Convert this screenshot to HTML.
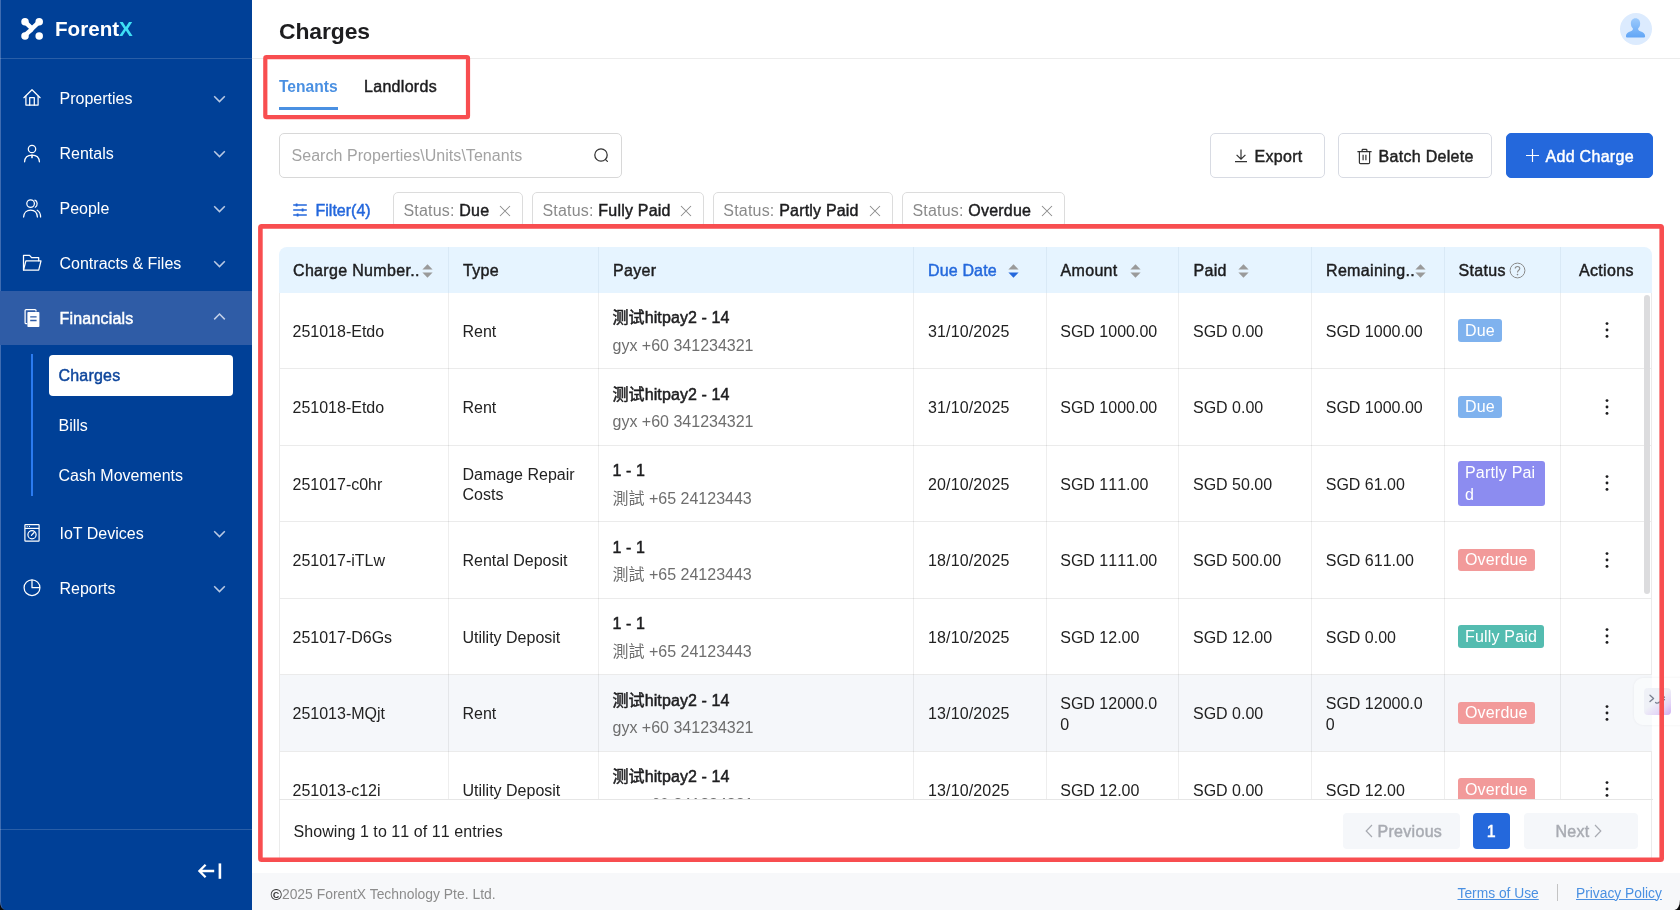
<!DOCTYPE html>
<html lang="en">
<head>
<meta charset="utf-8">
<title>Charges - ForentX</title>
<style>
*{box-sizing:border-box;margin:0;padding:0}
html,body{width:1680px;height:910px;overflow:hidden;background:#fff}
body{position:relative;font-family:"Liberation Sans","Noto Sans CJK SC",sans-serif;font-size:16px;color:#222;-webkit-font-smoothing:antialiased}
.abs{position:absolute}
.md{font-weight:normal!important;-webkit-text-stroke:.45px;letter-spacing:.3px}
svg{display:block}

/* ---------- sidebar ---------- */
#side{position:absolute;left:0;top:0;width:251.5px;height:910px;background:#004097;color:#fff}
#side .edge{position:absolute;left:0;top:0;width:1px;height:901px;background:#3f6cb1}
#logo{position:absolute;left:0;top:0;width:251.5px;height:58.5px;border-bottom:1px solid rgba(255,255,255,.16)}
#logo .mark{position:absolute;left:20px;top:17px}
#logo .txt{position:absolute;left:55px;top:16.3px;font-size:20.6px;font-weight:bold;line-height:26px;letter-spacing:0}
#logo .txt b{color:#3fe0f5}
.mi{position:absolute;left:0;width:251.5px;height:55px}
.mi.on{background:#2f5ca6}
.mi .ic{position:absolute;left:22px;top:17px;width:20px;height:20px}
.mi .lb{position:absolute;left:59.5px;top:0;line-height:55px;font-size:16px;white-space:nowrap}
.mi.on .lb{-webkit-text-stroke:.45px;letter-spacing:.2px;line-height:56px}
.mi .ch{position:absolute;left:213px;top:23.6px;width:13px;height:10px}
#subline{position:absolute;left:30.5px;top:354px;width:2px;height:141.5px;background:#2b7bf0}
.sub{position:absolute;left:58.5px;font-size:16px;line-height:20px;white-space:nowrap}
#subon{position:absolute;left:49.3px;top:354.8px;width:183.7px;height:41.2px;background:#fff;border-radius:4px}
#sidediv{position:absolute;left:0;top:829px;width:251.5px;height:1px;background:rgba(255,255,255,.16)}

/* ---------- header ---------- */
#hdr{position:absolute;left:251.5px;top:0;width:1428.5px;height:58.5px;border-bottom:1px solid #ececec;background:#fff}
#title{position:absolute;left:279px;top:15px;font-size:22.9px;font-weight:bold;line-height:32px;color:#1d1d1f;letter-spacing:-.1px}

/* ---------- tabs / toolbar ---------- */
#avatar{position:absolute;left:1620px;top:13.2px;width:32px;height:32px;border-radius:50%;background:#dcebfe;overflow:hidden}
.tab{position:absolute;top:75.7px;line-height:22px;font-size:15.6px;font-weight:bold;white-space:nowrap}
#tabline{position:absolute;left:279px;top:107px;width:59.2px;height:3px;background:#4a90e2}
.redbox{position:absolute;border:4.5px solid #f84e50;border-radius:3px}
#search{position:absolute;left:279px;top:133px;width:342.5px;height:45px;border:1px solid #d8d8d8;border-radius:5px;background:#fff}
#search span{position:absolute;left:11.5px;top:0;line-height:44px;font-size:16px;letter-spacing:.04px;color:#a3a3a3;white-space:nowrap}
.btn{position:absolute;top:133px;height:44.7px;border:1px solid #d8dbe3;border-radius:5px;background:#fff;font-size:16px;-webkit-text-stroke:.45px;letter-spacing:.3px;line-height:45.4px;white-space:nowrap;color:#222}
.btn span{position:absolute;top:0}
#filter{position:absolute;left:315.5px;top:200.5px;line-height:20px;font-size:16px;-webkit-text-stroke:.45px;color:#2367dc;white-space:nowrap}
.chip{position:absolute;top:192px;height:35.5px;border:1px solid #dcdcdc;border-radius:5px;background:#fff;font-size:16px;line-height:35px;white-space:nowrap;color:#8a8a8a;letter-spacing:.2px}
.chip span{position:absolute;top:0}
.chip b{color:#1d1d1f;font-weight:normal;-webkit-text-stroke:.45px}
.chip svg{position:absolute;top:12px}

/* ---------- table ---------- */
#tblwrap{position:absolute;left:279px;top:292.5px;width:1372.7px;height:565px;border-left:1px solid #ebebeb;border-right:1px solid #ebebeb}
#thead{position:absolute;left:279px;top:247px;width:1372.7px;height:45.5px;background:#e6f4ff;border-radius:8px 8px 0 0}
.th{position:absolute;top:248px;height:45.5px;line-height:45.5px;font-size:16px;-webkit-text-stroke:.45px;letter-spacing:.33px;color:#1d1d1f;white-space:nowrap}
.vl{position:absolute;top:292.5px;width:1px;height:506px;background:rgba(0,0,0,.068);z-index:2}
.vlh{position:absolute;top:247px;width:1px;height:45.5px;background:#d9e9f6;z-index:2}
#tbody{position:absolute;left:279.5px;top:292.5px;width:1372.5px;height:506.5px;overflow:hidden}
.row{position:absolute;left:0;width:1372.5px;height:76.5px;border-bottom:1px solid #ebebeb}
.row.hv{background:#f5f7fa}
.c{position:absolute;top:1.5px;height:76px;font-kerning:none;margin-left:.5px;display:flex;flex-direction:column;justify-content:center;font-size:16px;line-height:20.5px;color:#222}
.c .p1{font-size:16px;-webkit-text-stroke:.5px;letter-spacing:.1px;line-height:20px;color:#1d1d1f;margin-bottom:7px;white-space:nowrap;position:relative;top:-.3px}
.c .p2{color:#6e6e6e;line-height:20px;white-space:nowrap}
.tag{display:inline-block;align-self:flex-start;padding:.7px 7px 0;margin-left:-.6px;border-radius:3px;color:#fff;font-size:16px;line-height:22.3px;letter-spacing:.2px;position:relative;top:-1.5px;font-kerning:normal}
.dots{position:absolute;left:1325px;top:29.5px;width:4px;height:16px}
#tfootline{position:absolute;left:279px;top:798.5px;width:1373.5px;height:1px;background:#e6e6e6}
#showing{position:absolute;left:293.5px;top:822px;line-height:20px;font-size:16px;color:#222;white-space:nowrap;font-kerning:none;letter-spacing:.07px}
.pg{position:absolute;top:813px;height:36px;border-radius:4px;background:#f5f7fa;color:#a8abb2;font-size:16px;-webkit-text-stroke:.45px;letter-spacing:.3px;line-height:38px;white-space:nowrap}
.pg span{position:absolute;top:0}
#scroll{position:absolute;left:1644px;top:295px;width:6px;height:299px;border-radius:3px;background:#dcdcde}
#scrolltrack{display:none}
/* ---------- footer ---------- */
#foot{position:absolute;left:251.5px;top:873px;width:1428.5px;height:37px;background:#f7f8fa}
#foot .l{position:absolute;top:12.5px;line-height:16px;font-size:13.8px;white-space:nowrap}
.corner{position:absolute;bottom:0;width:12px;height:12px;background:#000}
</style>
</head>
<body>
<div id="app" style="position:absolute;left:0;top:0;width:1680px;height:910px;overflow:hidden;will-change:transform">

<!-- SIDEBAR -->
<div id="side">
  <div class="edge"></div>
  <div id="logo">
    <svg class="mark" width="24" height="24" viewBox="0 0 24 24"><g fill="#fff" stroke="#fff"><path d="M5 4.8 L12 11.6 L19.2 4.8 M12.2 11.4 C10.6 14.4 8 14.6 5 18.9" stroke-width="4.5" fill="none" stroke-linecap="round" stroke-linejoin="round"/><circle cx="5" cy="4.8" r="3.75" stroke="none"/><circle cx="19.2" cy="4.8" r="3.75" stroke="none"/><circle cx="5" cy="18.9" r="3.75" stroke="none"/><circle cx="19.2" cy="18.9" r="3.75" stroke="none"/></g></svg>
    <div class="txt">Forent<b>X</b></div>
  </div>

  <!-- menu -->
  <div class="mi" style="top:70.5px">
    <svg class="ic" viewBox="0 0 20 20" fill="none" stroke="#fff" stroke-width="1.25" stroke-linejoin="round" stroke-linecap="round"><path d="M1.9 9.7 L10 1.7 L18.1 9.7"/><path d="M3.9 8.2 V17.1 H16.1 V8.2"/><path d="M7.7 17.1 V9.6 H12.3 V17.1"/></svg>
    <div class="lb">Properties</div>
    <svg class="ch" viewBox="0 0 13 10" fill="none" stroke="#b9c9e3" stroke-width="1.5"><path d="M1.2 2.2 L6.5 7.6 L11.8 2.2"/></svg>
  </div>
  <div class="mi" style="top:125.5px">
    <svg class="ic" viewBox="0 0 20 20" fill="none" stroke="#fff" stroke-width="1.25" stroke-linecap="round"><circle cx="10" cy="6" r="3.7"/><path d="M2.6 18.8 C2.8 14.4 6 12.1 10 12.1 S17.2 14.4 17.4 18.8"/><path d="M10 12.3 V14.6" stroke-width="1.6"/></svg>
    <div class="lb">Rentals</div>
    <svg class="ch" viewBox="0 0 13 10" fill="none" stroke="#b9c9e3" stroke-width="1.5"><path d="M1.2 2.2 L6.5 7.6 L11.8 2.2"/></svg>
  </div>
  <div class="mi" style="top:180.5px">
    <svg class="ic" viewBox="0 0 20 20" fill="none" stroke="#fff" stroke-width="1.25" stroke-linecap="round"><circle cx="8.6" cy="5.6" r="3.8"/><path d="M1.6 19 C1.8 14.6 4.8 12 8.6 12 S15.2 14.6 15.4 19"/><path d="M12.9 2.2 C15.6 3 16 7.6 13.3 9.2"/><path d="M15.2 12.2 C17.4 13.3 18.5 15.8 18.6 19"/></svg>
    <div class="lb">People</div>
    <svg class="ch" viewBox="0 0 13 10" fill="none" stroke="#b9c9e3" stroke-width="1.5"><path d="M1.2 2.2 L6.5 7.6 L11.8 2.2"/></svg>
  </div>
  <div class="mi" style="top:235.5px">
    <svg class="ic" viewBox="0 0 20 20" fill="none" stroke="#fff" stroke-width="1.25" stroke-linejoin="round" stroke-linecap="round"><path d="M1.5 16.8 V2.3 H7.6 L9.6 4.7 H16.7 V7.8"/><path d="M1.5 17.2 L3.9 7.9 H19 L16.7 17.2 Z"/></svg>
    <div class="lb">Contracts &amp; Files</div>
    <svg class="ch" viewBox="0 0 13 10" fill="none" stroke="#b9c9e3" stroke-width="1.5"><path d="M1.2 2.2 L6.5 7.6 L11.8 2.2"/></svg>
  </div>
  <div class="mi on" style="top:290.6px;height:54.4px">
    <svg class="ic" style="top:17.4px" viewBox="0 0 20 20" fill="none" stroke="#fff" stroke-width="1.25" stroke-linejoin="round"><path d="M5.3 15.7 H4.1 Q3.1 15.7 3.1 14.7 V2.6 Q3.1 1.6 4.1 1.6 H13 Q14 1.6 14 2.6 V3.6"/><path d="M6.2 3.9 H16.6 Q17.4 3.9 17.4 4.7 V18.2 Q17.4 19 16.6 19 H6.2 Q5.4 19 5.4 18.2 V4.7 Q5.4 3.9 6.2 3.9 Z" fill="#fff" stroke="none"/><path d="M8.2 8.9 H14.6 M8.2 12.5 H14.6" stroke="#2f5ca6" stroke-width="1.4"/></svg>
    <div class="lb">Financials</div>
    <svg class="ch" style="top:21.2px" viewBox="0 0 13 10" fill="none" stroke="#c3d0e8" stroke-width="1.5"><path d="M1.2 7.4 L6.5 2 L11.8 7.4"/></svg>
  </div>
  <div id="subline"></div>
  <div id="subon"></div>
  <div class="sub md" style="top:366px;color:#0e469c;letter-spacing:.2px">Charges</div>
  <div class="sub" style="top:416.3px">Bills</div>
  <div class="sub" style="top:466px">Cash Movements</div>
  <div class="mi" style="top:505.5px">
    <svg class="ic" viewBox="0 0 20 20" fill="none" stroke="#fff" stroke-width="1.2" stroke-linejoin="round"><rect x="2.9" y="1.6" width="14.2" height="16.6" rx=".6"/><path d="M2.9 5.4 H17.1"/><path d="M4.7 3.5 h1 M7 3.5 h1" stroke-width="1.1"/><circle cx="10" cy="11.7" r="4.1"/><path d="M9.4 12.4 L12.1 9.5" stroke-linecap="round"/></svg>
    <div class="lb">IoT Devices</div>
    <svg class="ch" viewBox="0 0 13 10" fill="none" stroke="#b9c9e3" stroke-width="1.5"><path d="M1.2 2.2 L6.5 7.6 L11.8 2.2"/></svg>
  </div>
  <div class="mi" style="top:560.5px">
    <svg class="ic" viewBox="0 0 20 20" fill="none" stroke="#fff" stroke-width="1.25" stroke-linejoin="round"><circle cx="10" cy="9.7" r="7.9"/><path d="M10 1.8 V9.7 H17.9"/></svg>
    <div class="lb">Reports</div>
    <svg class="ch" viewBox="0 0 13 10" fill="none" stroke="#b9c9e3" stroke-width="1.5"><path d="M1.2 2.2 L6.5 7.6 L11.8 2.2"/></svg>
  </div>
  <div id="sidediv"></div>
  <svg class="abs" style="left:197px;top:861px" width="26" height="20" viewBox="0 0 26 20" fill="none" stroke="#fff" stroke-width="2.3"><path d="M2.2 10 H17.2 M8.6 3.8 L2.4 10 L8.6 16.2" stroke-linejoin="miter"/><path d="M22.9 2.4 V17.8" stroke-width="2.6"/></svg>
</div>

<!-- HEADER -->
<div id="hdr"></div>
<div id="title">Charges</div>

<div id="avatar"><svg width="32" height="32" viewBox="0.5 0.8 33 33"><defs><linearGradient id="ag" x1="0" y1="0" x2="0" y2="1"><stop offset="0" stop-color="#9ccafc"/><stop offset="1" stop-color="#62a6f6"/></linearGradient></defs><path d="M16.5 6.2 C19.6 6.2 21.3 8.6 21.3 11.6 C21.3 13.8 20.4 15.6 19.2 16.8 C19 18 19.6 18.8 21.4 19.6 C24.2 20.8 26.2 21.6 26.4 24.4 C26.4 25.4 25.8 26 24.8 26 H8.2 C7.2 26 6.6 25.4 6.6 24.4 C6.8 21.6 8.8 20.8 11.6 19.6 C13.4 18.8 14 18 13.8 16.8 C12.6 15.6 11.7 13.8 11.7 11.6 C11.7 8.6 13.4 6.2 16.5 6.2 Z" fill="url(#ag)"/></svg></div>

<!-- tabs -->
<div class="tab" style="left:279px;color:#4a90e2">Tenants</div>
<div class="tab md" style="left:364px;color:#1d1d1f;font-size:16px">Landlords</div>
<div id="tabline"></div>

<!-- search -->
<div id="search"><span>Search Properties\Units\Tenants</span>
<svg class="abs" style="left:313px;top:12.7px" width="17" height="17" viewBox="0 0 17 17" fill="none" stroke="#333" stroke-width="1.25"><circle cx="8" cy="8" r="6.2"/><path d="M12.6 12.6 L14.4 14.4" stroke-linecap="round"/></svg></div>

<!-- buttons -->
<div class="btn" style="left:1210px;width:114.5px"><svg class="abs" style="left:21.5px;top:13px" width="16" height="18" viewBox="0 0 16 18" fill="none" stroke="#333" stroke-width="1.2"><path d="M8 2.4 V12 M3.6 7.8 L8 12.2 L12.4 7.8 M2 14.7 H14"/></svg><span style="left:43.5px">Export</span></div>
<div class="btn" style="left:1338px;width:154px"><svg class="abs" style="left:17px;top:12.5px" width="17" height="20" viewBox="0 0 17 20" fill="none" stroke="#333" stroke-width="1.2" stroke-linejoin="round"><path d="M1.4 4.6 H15.6 M6.1 4.4 V3.2 Q6.1 2.4 6.9 2.4 H10.1 Q10.9 2.4 10.9 3.2 V4.4 M3.4 4.8 V15.4 Q3.4 16.6 4.6 16.6 H12.4 Q13.6 16.6 13.6 15.4 V4.8 M7.1 7.8 V13.2 M9.9 7.8 V13.2"/></svg><span style="left:39.5px">Batch Delete</span></div>
<div class="btn" style="left:1506px;width:146.5px;background:#2468dc;border-color:#2468dc;color:#fff"><svg class="abs" style="left:18px;top:14px" width="15" height="15" viewBox="0 0 15 15" fill="none" stroke="#fff" stroke-width="1.15"><path d="M7.5 1 V14 M1 7.5 H14"/></svg><span style="left:38.5px">Add Charge</span></div>

<!-- filters -->
<svg class="abs" style="left:292px;top:202px" width="16" height="16" viewBox="0 0 16 16" fill="none" stroke="#2367dc" stroke-width="1.3"><path d="M1.2 3 H14.8 M1.2 8 H14.8 M1.2 13 H14.8"/><path d="M4.6 1.4 V4.6 M10.6 6.4 V9.6 M5.6 11.4 V14.6" stroke-width="1.8"/></svg>
<div id="filter">Filter(4)</div>
<div class="chip" style="left:393px;width:129.5px"><span style="left:9.5px">Status: <b>Due</b></span><svg style="left:105px" width="12" height="12" viewBox="0 0 12 12" stroke="#8a8a8a" stroke-width="1.05"><path d="M1 1 L11 11 M11 1 L1 11"/></svg></div>
<div class="chip" style="left:532px;width:172px"><span style="left:9.5px">Status: <b>Fully Paid</b></span><svg style="left:147px" width="12" height="12" viewBox="0 0 12 12" stroke="#8a8a8a" stroke-width="1.05"><path d="M1 1 L11 11 M11 1 L1 11"/></svg></div>
<div class="chip" style="left:712.8px;width:180.4px"><span style="left:9.5px">Status: <b>Partly Paid</b></span><svg style="left:155px" width="12" height="12" viewBox="0 0 12 12" stroke="#8a8a8a" stroke-width="1.05"><path d="M1 1 L11 11 M11 1 L1 11"/></svg></div>
<div class="chip" style="left:902px;width:163px"><span style="left:9.5px">Status: <b>Overdue</b></span><svg style="left:138px" width="12" height="12" viewBox="0 0 12 12" stroke="#8a8a8a" stroke-width="1.05"><path d="M1 1 L11 11 M11 1 L1 11"/></svg></div>

<!-- TABLE -->
<div id="tblwrap"></div>
<div id="thead"></div>
<div class="th" style="left:293px">Charge Number..</div><svg class="abs" style="left:421.5px;top:264px" width="11" height="14" viewBox="0 0 11 14"><path d="M5.5 0.2 L10.6 5.6 H0.4 Z" fill="#9a9a9a"/><path d="M5.5 13.8 L10.6 8.4 H0.4 Z" fill="#9a9a9a"/></svg>
<div class="th" style="left:463px">Type</div>
<div class="th" style="left:613px">Payer</div>
<div class="th" style="left:928px;color:#2468dc;letter-spacing:.15px">Due Date</div><svg class="abs" style="left:1007.5px;top:264px" width="11" height="14" viewBox="0 0 11 14"><path d="M5.5 0.2 L10.6 5.6 H0.4 Z" fill="#9a9a9a"/><path d="M5.5 13.8 L10.6 8.4 H0.4 Z" fill="#2468dc"/></svg>
<div class="th" style="left:1060.5px">Amount</div><svg class="abs" style="left:1129.5px;top:264px" width="11" height="14" viewBox="0 0 11 14"><path d="M5.5 0.2 L10.6 5.6 H0.4 Z" fill="#9a9a9a"/><path d="M5.5 13.8 L10.6 8.4 H0.4 Z" fill="#9a9a9a"/></svg>
<div class="th" style="left:1193.5px">Paid</div><svg class="abs" style="left:1237.5px;top:264px" width="11" height="14" viewBox="0 0 11 14"><path d="M5.5 0.2 L10.6 5.6 H0.4 Z" fill="#9a9a9a"/><path d="M5.5 13.8 L10.6 8.4 H0.4 Z" fill="#9a9a9a"/></svg>
<div class="th" style="left:1326px">Remaining..</div><svg class="abs" style="left:1415px;top:264px" width="11" height="14" viewBox="0 0 11 14"><path d="M5.5 0.2 L10.6 5.6 H0.4 Z" fill="#9a9a9a"/><path d="M5.5 13.8 L10.6 8.4 H0.4 Z" fill="#9a9a9a"/></svg>
<div class="th" style="left:1458.5px">Status</div><svg class="abs" style="left:1508.5px;top:261.5px" width="17" height="17" viewBox="0 0 17 17" fill="none" stroke="#8a8a8a" stroke-width="1"><circle cx="8.5" cy="8.5" r="7.4"/><path d="M6.2 6.6 C6.2 3.8 10.8 3.8 10.8 6.6 C10.8 8.4 8.5 8.2 8.5 10.4" stroke-width="1.1"/><circle cx="8.5" cy="12.6" r=".8" fill="#8a8a8a" stroke="none"/></svg>
<div class="th" style="left:1579px">Actions</div>
<div class="vl" style="left:448px"></div><div class="vlh" style="left:448px"></div>
<div class="vl" style="left:598px"></div><div class="vlh" style="left:598px"></div>
<div class="vl" style="left:913px"></div><div class="vlh" style="left:913px"></div>
<div class="vl" style="left:1046px"></div><div class="vlh" style="left:1046px"></div>
<div class="vl" style="left:1178px"></div><div class="vlh" style="left:1178px"></div>
<div class="vl" style="left:1311px"></div><div class="vlh" style="left:1311px"></div>
<div class="vl" style="left:1444px"></div><div class="vlh" style="left:1444px"></div>
<div class="vl" style="left:1560px"></div><div class="vlh" style="left:1560px"></div>
<div id="tbody">
<div class="row" style="top:0.0px"><div class="c" style="left:12.5px">251018-Etdo</div><div class="c" style="left:182.5px">Rent</div><div class="c" style="left:332.5px"><div class="p1">测试hitpay2 - 14</div><div class="p2">gyx +60 341234321</div></div><div class="c" style="left:648px;letter-spacing:.14px">31/10/2025</div><div class="c" style="left:780.25px">SGD 1000.00</div><div class="c" style="left:913.0px">SGD 0.00</div><div class="c" style="left:1045.75px">SGD 1000.00</div><div class="c" style="left:1178.5px"><span class="tag" style="background:#7fb2ee">Due</span></div><svg class="dots" viewBox="0 0 4 16" fill="#1d1d1f"><circle cx="2" cy="1.6" r="1.45"/><circle cx="2" cy="8" r="1.45"/><circle cx="2" cy="14.4" r="1.45"/></svg></div>
<div class="row" style="top:76.5px"><div class="c" style="left:12.5px">251018-Etdo</div><div class="c" style="left:182.5px">Rent</div><div class="c" style="left:332.5px"><div class="p1">测试hitpay2 - 14</div><div class="p2">gyx +60 341234321</div></div><div class="c" style="left:648px;letter-spacing:.14px">31/10/2025</div><div class="c" style="left:780.25px">SGD 1000.00</div><div class="c" style="left:913.0px">SGD 0.00</div><div class="c" style="left:1045.75px">SGD 1000.00</div><div class="c" style="left:1178.5px"><span class="tag" style="background:#7fb2ee">Due</span></div><svg class="dots" viewBox="0 0 4 16" fill="#1d1d1f"><circle cx="2" cy="1.6" r="1.45"/><circle cx="2" cy="8" r="1.45"/><circle cx="2" cy="14.4" r="1.45"/></svg></div>
<div class="row" style="top:153.0px"><div class="c" style="left:12.5px">251017-c0hr</div><div class="c" style="left:182.5px">Damage Repair<br>Costs</div><div class="c" style="left:332.5px"><div class="p1">1 - 1</div><div class="p2">測試 +65 24123443</div></div><div class="c" style="left:648px;letter-spacing:.14px">20/10/2025</div><div class="c" style="left:780.25px">SGD 111.00</div><div class="c" style="left:913.0px">SGD 50.00</div><div class="c" style="left:1045.75px">SGD 61.00</div><div class="c" style="left:1178.5px"><span class="tag" style="background:#8c8cf0;width:87.5px">Partly Pai<br>d</span></div><svg class="dots" viewBox="0 0 4 16" fill="#1d1d1f"><circle cx="2" cy="1.6" r="1.45"/><circle cx="2" cy="8" r="1.45"/><circle cx="2" cy="14.4" r="1.45"/></svg></div>
<div class="row" style="top:229.5px"><div class="c" style="left:12.5px">251017-iTLw</div><div class="c" style="left:182.5px">Rental Deposit</div><div class="c" style="left:332.5px"><div class="p1">1 - 1</div><div class="p2">測試 +65 24123443</div></div><div class="c" style="left:648px;letter-spacing:.14px">18/10/2025</div><div class="c" style="left:780.25px">SGD 1111.00</div><div class="c" style="left:913.0px">SGD 500.00</div><div class="c" style="left:1045.75px">SGD 611.00</div><div class="c" style="left:1178.5px"><span class="tag" style="background:#f29a9a">Overdue</span></div><svg class="dots" viewBox="0 0 4 16" fill="#1d1d1f"><circle cx="2" cy="1.6" r="1.45"/><circle cx="2" cy="8" r="1.45"/><circle cx="2" cy="14.4" r="1.45"/></svg></div>
<div class="row" style="top:306.0px"><div class="c" style="left:12.5px">251017-D6Gs</div><div class="c" style="left:182.5px">Utility Deposit</div><div class="c" style="left:332.5px"><div class="p1">1 - 1</div><div class="p2">測試 +65 24123443</div></div><div class="c" style="left:648px;letter-spacing:.14px">18/10/2025</div><div class="c" style="left:780.25px">SGD 12.00</div><div class="c" style="left:913.0px">SGD 12.00</div><div class="c" style="left:1045.75px">SGD 0.00</div><div class="c" style="left:1178.5px"><span class="tag" style="background:#54bcb0">Fully Paid</span></div><svg class="dots" viewBox="0 0 4 16" fill="#1d1d1f"><circle cx="2" cy="1.6" r="1.45"/><circle cx="2" cy="8" r="1.45"/><circle cx="2" cy="14.4" r="1.45"/></svg></div>
<div class="row hv" style="top:382.5px"><div class="c" style="left:12.5px">251013-MQjt</div><div class="c" style="left:182.5px">Rent</div><div class="c" style="left:332.5px"><div class="p1">测试hitpay2 - 14</div><div class="p2">gyx +60 341234321</div></div><div class="c" style="left:648px;letter-spacing:.14px">13/10/2025</div><div class="c" style="left:780.25px">SGD 12000.0<br>0</div><div class="c" style="left:913.0px">SGD 0.00</div><div class="c" style="left:1045.75px">SGD 12000.0<br>0</div><div class="c" style="left:1178.5px"><span class="tag" style="background:#f29a9a">Overdue</span></div><svg class="dots" viewBox="0 0 4 16" fill="#1d1d1f"><circle cx="2" cy="1.6" r="1.45"/><circle cx="2" cy="8" r="1.45"/><circle cx="2" cy="14.4" r="1.45"/></svg></div>
<div class="row" style="top:459.0px"><div class="c" style="left:12.5px">251013-c12i</div><div class="c" style="left:182.5px">Utility Deposit</div><div class="c" style="left:332.5px"><div class="p1">测试hitpay2 - 14</div><div class="p2">gyx +60 341234321</div></div><div class="c" style="left:648px;letter-spacing:.14px">13/10/2025</div><div class="c" style="left:780.25px">SGD 12.00</div><div class="c" style="left:913.0px">SGD 0.00</div><div class="c" style="left:1045.75px">SGD 12.00</div><div class="c" style="left:1178.5px"><span class="tag" style="background:#f29a9a">Overdue</span></div><svg class="dots" viewBox="0 0 4 16" fill="#1d1d1f"><circle cx="2" cy="1.6" r="1.45"/><circle cx="2" cy="8" r="1.45"/><circle cx="2" cy="14.4" r="1.45"/></svg></div>
</div>
<div id="scrolltrack"></div><div id="scroll"></div>
<div id="tfootline"></div>
<div id="showing">Showing 1 to 11 of 11 entries</div>
<div class="pg" style="left:1343px;width:116.5px"><svg class="abs" style="left:22px;top:11px" width="8" height="14" viewBox="0 0 8 14" fill="none" stroke="#a8abb2" stroke-width="1.2"><path d="M7 1 L1.2 7 L7 13"/></svg><span style="left:34.5px">Previous</span></div>
<div class="pg" style="left:1473px;width:36.5px;background:#2468dc;color:#fff;text-align:center">1</div>
<div class="pg" style="left:1523.5px;width:114px"><span style="left:32px">Next</span><svg class="abs" style="left:70px;top:11px" width="8" height="14" viewBox="0 0 8 14" fill="none" stroke="#a8abb2" stroke-width="1.2"><path d="M1 1 L6.8 7 L1 13"/></svg></div>
<div class="abs" style="left:1634px;top:677.5px;width:60px;height:47px;border-radius:9px;background:rgba(255,255,255,.45);box-shadow:0 0 3px rgba(0,0,0,.06)"><div class="abs" style="left:10px;top:10px;width:27px;height:27px;border-radius:4px;background:linear-gradient(140deg,#eff1f7 45%,#e4d6f7 75%,#cfb0f3 100%)"><svg class="abs" style="left:5px;top:6px" width="18" height="10" viewBox="0 0 18 10" fill="none" stroke="#7a8090" stroke-width="1.3" stroke-linecap="round" stroke-linejoin="round"><path d="M1 1.2 L4.6 4.4 L1 7.6"/><path d="M6.6 8.4 Q8.4 10 10.4 8"/><path d="M14 1.6 L15.6 3.4 M15.6 5.4 L14 7.2" stroke-width="1.1"/></svg></div></div>
<svg class="abs" style="left:0;top:0;pointer-events:none" width="1680" height="910" viewBox="0 0 1680 910" fill="none" stroke="#f84e50"><rect x="265.3" y="57.1" width="202.7" height="60.1" rx="1.2" stroke-width="4.2"/><rect x="260.4" y="226.4" width="1401.3" height="633.4" rx="1.2" stroke-width="4.6"/></svg>
<div id="foot"><div class="l" style="left:19px;color:#8c8c8c;font-size:13.9px"><span style="color:#3a3a3a;font-weight:bold;font-size:15.5px;line-height:16px;vertical-align:-.5px">©</span>2025 ForentX Technology Pte. Ltd.</div>
<div class="l" style="left:1206px;color:#4a90e2;text-decoration:underline">Terms of Use</div>
<div class="abs" style="left:1305px;top:10.5px;width:1px;height:17.5px;background:#c4c4c4"></div>
<div class="l" style="left:1324.5px;color:#4a90e2;text-decoration:underline">Privacy Policy</div></div>
<div class="abs" style="left:0;top:901px;width:6px;height:9px;background:#0a0a0a"><div class="abs" style="left:0;top:0;width:6px;height:9px;background:#004097;border-bottom-left-radius:5.5px 8.5px;border-left:1px solid #3f6cb1"></div></div>
<div class="abs" style="left:1674px;top:899px;width:6px;height:11px;background:#0a0a0a"><div class="abs" style="left:0;top:0;width:6px;height:11px;background:#f7f8fa;border-bottom-right-radius:5.5px 10.5px"></div></div>
</div>
</body>
</html>
